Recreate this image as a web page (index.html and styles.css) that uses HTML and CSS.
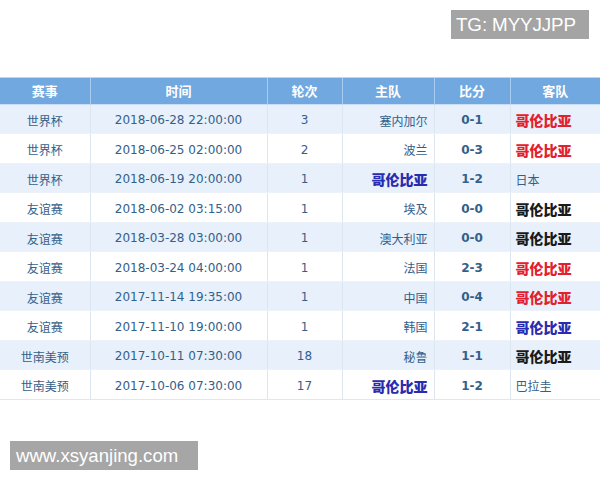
FILE: index.html
```html
<!DOCTYPE html>
<html lang="zh-CN">
<head>
<meta charset="utf-8">
<title>哥伦比亚 赛程</title>
<link rel="stylesheet" href="styles.css">
</head>
<body>
<div class="page">
  <div class="topbar"><span class="tag">TG: MYYJJPP</span></div>
  <table class="matches">
    <colgroup>
      <col class="c-comp"><col class="c-time"><col class="c-round"><col class="c-home"><col class="c-score"><col class="c-away">
    </colgroup>
    <thead>
      <tr><th>赛事</th><th>时间</th><th>轮次</th><th>主队</th><th>比分</th><th>客队</th></tr>
    </thead>
    <tbody>
      <tr><td class="comp">世界杯</td><td class="time">2018-06-28 22:00:00</td><td class="round">3</td><td class="home">塞内加尔</td><td class="score">0-1</td><td class="away"><b class="red">哥伦比亚</b></td></tr>
      <tr><td class="comp">世界杯</td><td class="time">2018-06-25 02:00:00</td><td class="round">2</td><td class="home">波兰</td><td class="score">0-3</td><td class="away"><b class="red">哥伦比亚</b></td></tr>
      <tr><td class="comp">世界杯</td><td class="time">2018-06-19 20:00:00</td><td class="round">1</td><td class="home"><b class="blue">哥伦比亚</b></td><td class="score">1-2</td><td class="away">日本</td></tr>
      <tr><td class="comp">友谊赛</td><td class="time">2018-06-02 03:15:00</td><td class="round">1</td><td class="home">埃及</td><td class="score">0-0</td><td class="away"><b class="black">哥伦比亚</b></td></tr>
      <tr><td class="comp">友谊赛</td><td class="time">2018-03-28 03:00:00</td><td class="round">1</td><td class="home">澳大利亚</td><td class="score">0-0</td><td class="away"><b class="black">哥伦比亚</b></td></tr>
      <tr><td class="comp">友谊赛</td><td class="time">2018-03-24 04:00:00</td><td class="round">1</td><td class="home">法国</td><td class="score">2-3</td><td class="away"><b class="red">哥伦比亚</b></td></tr>
      <tr><td class="comp">友谊赛</td><td class="time">2017-11-14 19:35:00</td><td class="round">1</td><td class="home">中国</td><td class="score">0-4</td><td class="away"><b class="red">哥伦比亚</b></td></tr>
      <tr><td class="comp">友谊赛</td><td class="time">2017-11-10 19:00:00</td><td class="round">1</td><td class="home">韩国</td><td class="score">2-1</td><td class="away"><b class="blue">哥伦比亚</b></td></tr>
      <tr><td class="comp">世南美预</td><td class="time">2017-10-11 07:30:00</td><td class="round">18</td><td class="home">秘鲁</td><td class="score">1-1</td><td class="away"><b class="black">哥伦比亚</b></td></tr>
      <tr><td class="comp">世南美预</td><td class="time">2017-10-06 07:30:00</td><td class="round">17</td><td class="home"><b class="blue">哥伦比亚</b></td><td class="score">1-2</td><td class="away">巴拉圭</td></tr>
    </tbody>
  </table>
  <div class="footer"><span class="site">www.xsyanjing.com</span></div>
</div>
</body>
</html>
```

FILE: styles.css
```css
html, body {
  margin: 0;
  padding: 0;
  background: #ffffff;
}

.page {
  width: 600px;
  height: 480px;
  overflow: hidden;
  font-family: "DejaVu Sans", "Noto Sans CJK SC", sans-serif;
}

.topbar {
  display: flex;
  justify-content: flex-end;
  padding: 10px 11px 0 0;
  height: 77px;
  box-sizing: border-box;
}

.tag {
  display: block;
  height: 29px;
  width: 138px;
  box-sizing: border-box;
  padding-left: 5px;
  background: #a4a4a4;
  color: #ffffff;
  font-family: "Liberation Sans", Arial, sans-serif;
  font-size: 18.8px;
  line-height: 30px;
  letter-spacing: -0.1px;
  white-space: nowrap;
}

.matches {
  width: 600px;
  border-collapse: collapse;
  table-layout: fixed;
}

.c-comp { width: 90px; }
.c-time { width: 177px; }
.c-round { width: 75px; }
.c-home { width: 92px; }
.c-score { width: 76px; }
.c-away { width: 90px; }

.matches th {
  height: 25.5px;
  padding: 0;
  background: #71a8e0;
  color: #ffffff;
  font-family: "Noto Sans CJK SC", sans-serif;
  font-size: 13px;
  font-weight: bold;
  text-align: center;
  border-left: 1px solid #a9cbef;
  border-top: 1px solid #bcd7f3;
  border-bottom: 1px solid #c8ddf3;
}

.matches th:first-child { border-left: none; }

.matches td {
  height: 25.5px;
  padding: 3px 0 0 0;
  border-left: 1px solid #dce6f0;
  border-bottom: 1px solid #edf2f8;
  font-size: 12px;
  white-space: nowrap;
  color: #33608a;
}

.matches td:first-child { border-left: none; }

.matches tbody tr:nth-child(odd) td { background: #e7f0fb; }
.matches tbody tr:nth-child(even) td { background: #ffffff; }
.matches tbody tr:last-child td { border-bottom: 1px solid #dfe8f2; }

.comp {
  text-align: center;
  font-family: "Noto Sans CJK SC", sans-serif;
  font-size: 13.5px;
  color: #2c5d8b;
}

.time {
  text-align: center;
  color: #4a4a4a;
}

.round {
  text-align: center;
  color: #555555;
}

.home {
  text-align: right;
  padding-right: 6px !important;
  font-family: "Noto Sans CJK SC", sans-serif;
  font-size: 13.5px;
}

.score {
  text-align: center;
  font-weight: bold;
  color: #1e4b72;
}

.away {
  text-align: left;
  padding-left: 5px !important;
  font-family: "Noto Sans CJK SC", sans-serif;
  font-size: 13.5px;
}

.home b, .away b {
  font-family: "Noto Sans CJK SC", sans-serif;
  font-size: 14px;
  font-weight: 900;
}

.red { color: #e3202e; }
.blue { color: #2b2bb0; }
.black { color: #1a1a1a; }

.footer {
  padding: 41px 0 0 10px;
}

.site {
  display: block;
  width: 188px;
  height: 29px;
  box-sizing: border-box;
  padding-left: 6px;
  background: #a6a6a6;
  color: #ffffff;
  font-family: "Liberation Sans", Arial, sans-serif;
  font-size: 18.6px;
  line-height: 29px;
  white-space: nowrap;
}
```
